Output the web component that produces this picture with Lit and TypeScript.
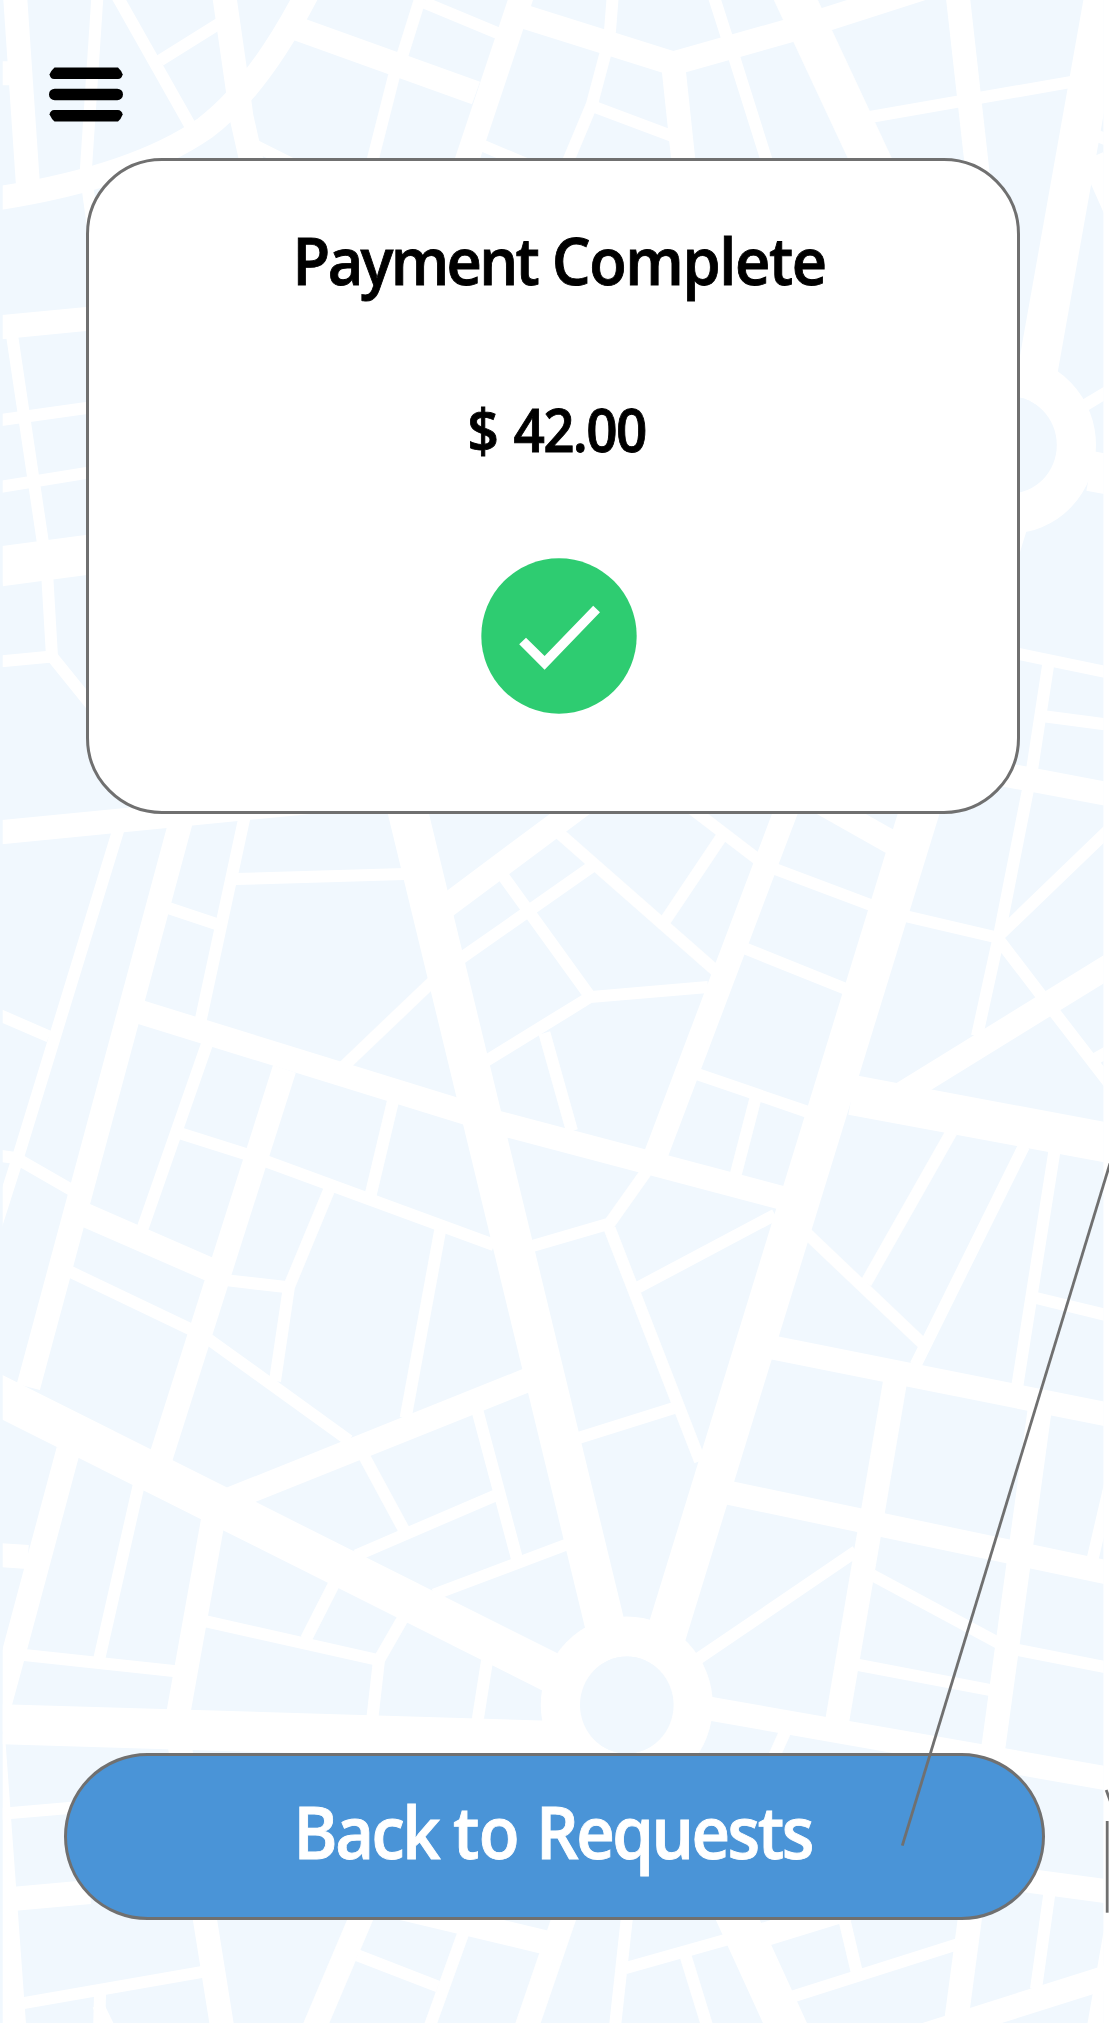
import { LitElement, html, css, svg } from "lit";
import { customElement } from "lit/decorators.js";

/* Street centre lines, grouped by road class. */
const avenues = [
  "M786.5 -20L887 195",
  "M1107.6 -22L1036 380",
  "M1090 471L1120 476.5",
  "M0 566.5L90 554.5",
  "M399 775L610 1646",
  "M1032 445L663 1645",
  "M852 1095L1120 1145",
  "M-40 1376L572 1683",
  "M-20 1723.5L590 1742",
  "M719.5 1880L795 2045",
  "M1125 1925L1104 2045",
];

const streets = [
  "M14 -20L28.3 190",
  "M0 73.3L15 73.3",
  "M-20 201Q130 180 205 128Q262 85 314 -20",
  "M222 -20L237 84L241.5 117L258 190",
  "M298 29L476 93",
  "M527 -20L457 190",
  "M522 16L673 63.5L788 31L827 19L930 -14",
  "M673 63L686.5 190",
  "M956 -20L979.5 190",
  "M1092 157L1120 220",
  "M-20 329.3L90 318.6",
  "M-20 834.3L315 801.5",
  "M189 791L28.3 1387",
  "M68.3 1450L14.9 1649L-7 1729",
  "M-7 1735L15.5 2045",
  "M140 1012L470 1114",
  "M495 1122L790 1200",
  "M284.4 1069L160 1460",
  "M445 907L590 799",
  "M798 779L655 1157",
  "M805 793.5L898 846",
  "M980 770L1120 796.4",
  "M900 1095L1130 953",
  "M770 1347L1120 1417",
  "M725 1492L1120 1575",
  "M895 1382L837 1722",
  "M1039.5 1411L993 1750",
  "M706 1708L1120 1780.7",
  "M84 1214.5L210 1269.5",
  "M530 1379L228 1500",
  "M213 1520L178 1715",
  "M-10 1554.5L28 1557",
  "M179 1740L205 1920L225 2045",
  "M12 1899L90 1892",
  "M377 1880L307 2045",
  "M347 1895L548 1943",
  "M577 1880L520.5 2045",
  "M758 1936.5L860 1905",
  "M975 1880L953 2045",
  "M880 2049L1120 1973",
  "M1020 1879.6L1120 1893",
];

const lanes = [
  "M98.5 -20L85.6 174",
  "M86.5 180L94 235",
  "M108 -20L191 127",
  "M160 60.5L220 23",
  "M246 141L310 173",
  "M426 -20L402.5 55L393.7 77L365 190",
  "M424 2.5L498 33.3",
  "M480 144.5L550 174",
  "M614 -20L610 31L605 55L592 104L556 190",
  "M592 106L672 136",
  "M708.5 -20L726.5 36L734.7 59L776 190",
  "M870 117L1073 81.6",
  "M1096 135.5L1112 141.5",
  "M1082 407L1120 384",
  "M12 335L42.8 542",
  "M-10 421.5L90 407.5",
  "M-10 488.5L90 472.4",
  "M47.3 577L52 656.5L92 706",
  "M-10 662.3L52 656.5",
  "M118.3 830L18.7 1155L-8 1239",
  "M-15 1008.7L49 1036.5",
  "M-10 1154.5L16 1158L72 1190.3",
  "M244.3 818L200.5 1021",
  "M207 1044L142 1230",
  "M235 879L405 874",
  "M169 908.3L217 924.3",
  "M432 982L344 1066",
  "M180 1133.3L245.5 1154L268 1162L494 1245",
  "M393 1101L370.6 1195",
  "M460 959L592 866.5",
  "M502.4 875L589 995",
  "M560 834L716 971",
  "M708 987L590 997L486 1061",
  "M544.4 1033L572 1131",
  "M721 837.5L665 921",
  "M675 796L758 859.5",
  "M646 1172L609.5 1223.5L529 1247",
  "M775 869L872 905.5",
  "M744 948L846 989",
  "M697 1074L808 1112",
  "M755.3 1099L735.6 1175",
  "M1048.3 664L1032.5 766.7L999.6 933L977 1036",
  "M1005 651L1120 675",
  "M1044 716.3L1120 726.2",
  "M905 916L997 937.5",
  "M997.5 937L1120 819",
  "M996 936L1040 993.7L1055 1013L1115 1091",
  "M1095 1059L1115 1047.5",
  "M951.5 1132L866 1283",
  "M1024 1146L915.6 1365",
  "M1054.3 1152L1017.3 1386",
  "M807 1233.7L922 1343",
  "M775 1214.7L637 1288",
  "M609.8 1229L700 1461",
  "M576 1438.7L674 1408",
  "M1034 1297.5L1120 1318.4",
  "M1092.6 1559L1111 1480",
  "M856 1551.3L697 1659.5",
  "M872 1575L998 1642.7",
  "M1015 1649.4L1120 1670",
  "M856 1664.5L992 1690.4",
  "M785 1732L768 1770",
  "M70 1271.7L192 1330",
  "M209 1339.5L349 1440.5",
  "M329.5 1189L289 1286.7L275 1381",
  "M228 1280.4L288 1287.3",
  "M440.4 1229L405.6 1418",
  "M364 1456L404 1530",
  "M477.5 1411L517 1558.7",
  "M356 1555.4L496 1495.2",
  "M434 1594.5L568 1544",
  "M138.5 1486L99.2 1659",
  "M22 1654.8L176 1671.2",
  "M205 1621.2L378 1660",
  "M334 1584L306 1639",
  "M402.5 1619L379 1660L372.5 1717",
  "M487 1661L477.7 1720",
  "M0 1814L75 1807.4",
  "M22 2003.4L204 1971.6",
  "M100 1994L99 2035",
  "M98 2005L114 2038",
  "M357 1955.2L438 1986.5",
  "M463 1934L423 2045",
  "M631 1880L613 2045",
  "M625 1968.3L727 1939.4",
  "M685.5 1955.7L713 2045",
  "M792 1996.8L957 1944.4",
  "M843 1914L856.5 1971",
  "M1049.3 1894L1036 1989",
];

@customElement("city-map")
class CityMap extends LitElement {
  static styles = css`
    :host { display: block; }
    .map { display: block; width: 100%; height: 100%; }
    .land { fill: #f1f8fe; }
    .road { fill: none; stroke: #fff; }
    .avenue { stroke-width: 40; }
    .street { stroke-width: 24; }
    .lane { stroke-width: 12; }
  `;

  render() {
    const roads = (list: string[], kind: string) =>
      list.map((d) => svg`<path class="road ${kind}" d=${d}></path>`);
    return html`
      <svg class="map" viewBox="0 0 1109 2023" aria-hidden="true">
        <defs><clipPath id="area"><rect x="2.7" y="0" width="1101" height="2023"></rect></clipPath></defs>
        <rect class="land" x="0" y="0" width="1103.4" height="2023"></rect>
        <g clip-path="url(#area)">
          ${roads(lanes, "lane")} ${roads(streets, "street")} ${roads(avenues, "avenue")}
          <ellipse class="road avenue" cx="1010" cy="445" rx="66" ry="68.5"></ellipse>
          <ellipse class="land" cx="1010" cy="445" rx="46.8" ry="48.4"></ellipse>
          <ellipse class="road avenue" cx="626.8" cy="1705" rx="66" ry="68.5"></ellipse>
          <ellipse class="land" cx="626.8" cy="1705" rx="46.8" ry="48.4"></ellipse>
        </g>
      </svg>
    `;
  }
}

@customElement("app-root")
class AppRoot extends LitElement {
  static styles = css`
    :host {
      display: block;
      font-family: "Open Sans", "Noto Sans", sans-serif;
      font-weight: 600;
    }
    .screen {
      position: relative;
      display: flex;
      flex-direction: column;
      box-sizing: border-box;
      width: 1109px;
      height: 2023px;
      overflow: hidden;
      background: #fff;
    }
    .backdrop, .links { position: absolute; inset: 0; }
    .links { z-index: 2; width: 1109px; height: 2023px; pointer-events: none; }
    .links path { fill: none; stroke: #707070; stroke-width: 2.8; }
    .bar { display: flex; height: 158px; padding: 66px 0 0 48px; box-sizing: border-box; z-index: 1; }
    .menu { display: block; width: 76px; height: 57px; padding: 0; border: 0; background: none; }
    .menu svg { display: block; }
    .card {
      display: flex;
      flex-direction: column;
      align-items: center;
      box-sizing: border-box;
      width: 934px;
      height: 656px;
      margin-left: 86px;
      padding-top: 53px;
      border: 3px solid #707070;
      border-radius: 76px;
      background: #fff;
      z-index: 1;
    }
    .title, .amount { margin: 0; color: #000; white-space: nowrap; }
    .title, .amount, .label {
      transform: scaleX(0.93);
      -webkit-text-stroke: 0.9px currentColor;
    }
    .title { font-size: 66px; line-height: 90px; font-weight: 600; letter-spacing: -1.5px; padding-left: 13px; }
    .title .tight { letter-spacing: -2.9px; }
    .amount { font-size: 59px; line-height: 80px; margin-top: 85px; letter-spacing: -1.8px; word-spacing: 4px; padding-left: 7px; }
    .done { display: block; width: 156px; height: 156px; margin: 89px 0 0 11px; }
    .back {
      display: flex;
      align-items: center;
      justify-content: center;
      box-sizing: border-box;
      width: 981px;
      height: 167px;
      margin: auto 0 103px 64px;
      padding: 0 3px 12px 0;
      border: 3px solid #707070;
      border-radius: 84px;
      background: #4a94d7;
      color: #fff;
      font: inherit;
      font-size: 72px;
      line-height: 98px;
      letter-spacing: -2.7px;
      white-space: nowrap;
      z-index: 1;
    }
    .back .loose { letter-spacing: -0.6px; }
  `;

  render() {
    return html`
      <main class="screen">
        <city-map class="backdrop"></city-map>
        <header class="bar">
          <button class="menu" aria-label="Menu">
            <svg width="76" height="57" viewBox="48 66 76 57">
              <path d="M54.5 67.5H118Q121 70 122.7 74.5Q121.5 79 118 79H54Q50.5 79 49.5 74.5Q51.5 70 54.5 67.5Z"></path>
              <rect x="49" y="88.7" width="74" height="11.5" rx="5.7"></rect>
              <path d="M54.5 121.5H118Q121 119 122.7 114.5Q121.5 110 118 110H54Q50.5 110 49.5 114.5Q51.5 119 54.5 121.5Z"></path>
            </svg>
          </button>
        </header>
        <section class="card">
          <h1 class="title"><span class="tight">Payment</span> Complete</h1>
          <p class="amount">$ 42.00</p>
          <svg class="done" viewBox="480 558 156 156" aria-hidden="true">
            <circle cx="558" cy="636" r="77.7" fill="#2ecc71"></circle>
            <path fill="#fff" d="M518.2 644.3L525 637.7L543.6 656L592.2 605.7L599 612.3L543.6 669.7Z"></path>
          </svg>
        </section>
        <button class="back"><span class="label">Back <span class="loose">to </span>Requests</span></button>
        <svg class="links" viewBox="0 0 1109 2023" aria-hidden="true">
          <path d="M1110 1163.5L902.3 1845.7"></path>
          <path d="M1107.2 1821V1912.7"></path>
          <path d="M1106.2 1790L1111 1803"></path>
        </svg>
      </main>
    `;
  }
}
